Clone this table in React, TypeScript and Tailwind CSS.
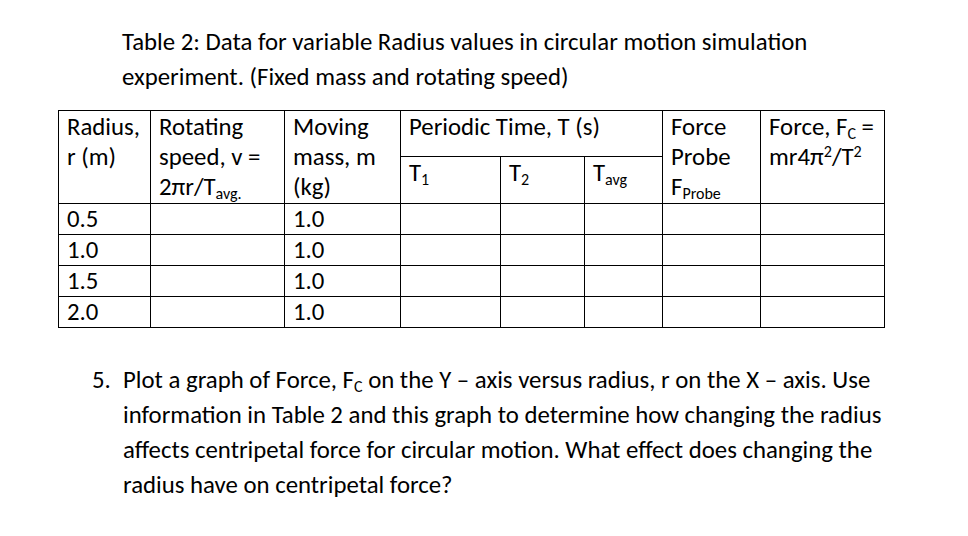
import React from 'react';

const rows = ['0.5', '1.0', '1.5', '2.0'];

const Sub = ({ children }: { children: React.ReactNode }) => (
  <span className="relative top-[4px] text-[16px] leading-none">{children}</span>
);

const Sup = ({ children }: { children: React.ReactNode }) => (
  <span className="relative top-[-8px] text-[16px] leading-none">{children}</span>
);

export default function App() {
  const cell = 'border border-black px-[8px] align-top font-normal text-left pt-[1px]';

  return (
    <div className="w-[968px] h-[536px] bg-white text-black font-['Carlito','Open_Sans',sans-serif] text-[24.8px] leading-[35px]">
      <div className="pl-[122px] pt-[24px]">
        <p>Table 2: Data for variable Radius values in circular motion simulation</p>
        <p>experiment. (Fixed mass and rotating speed)</p>
      </div>

      <div className="pl-[58px] pt-[16px]">
        <table className="table-fixed border-collapse w-[826px] leading-[30px]">
          <colgroup>
            <col className="w-[92px]" />
            <col className="w-[134px]" />
            <col className="w-[116px]" />
            <col className="w-[100px]" />
            <col className="w-[84px]" />
            <col className="w-[78px]" />
            <col className="w-[98px]" />
            <col className="w-[124px]" />
          </colgroup>
          <thead>
            <tr className="h-[46px]">
              <th rowSpan={2} className={cell}>
                Radius,
                <br />r (m)
              </th>
              <th rowSpan={2} className={cell}>
                Rotating
                <br />
                speed, v =
                <br />
                2πr/T<Sub>avg.</Sub>
              </th>
              <th rowSpan={2} className={cell}>
                Moving
                <br />
                mass, m
                <br />
                (kg)
              </th>
              <th colSpan={3} className={cell}>
                Periodic Time, T (s)
              </th>
              <th rowSpan={2} className={cell}>
                Force
                <br />
                Probe
                <br />
                F<Sub>Probe</Sub>
              </th>
              <th rowSpan={2} className={cell}>
                Force, F<Sub>C</Sub> =
                <br />
                mr4π<Sup>2</Sup>/T<Sup>2</Sup>
              </th>
            </tr>
            <tr className="h-[47px]">
              <th className={cell}>
                T<Sub>1</Sub>
              </th>
              <th className={cell}>
                T<Sub>2</Sub>
              </th>
              <th className={cell}>
                T<Sub>avg</Sub>
              </th>
            </tr>
          </thead>
          <tbody>
            {rows.map((r, i) => (
              <tr key={i} className="h-[31px]">
                <td className="border border-black px-[8px] align-middle">{r}</td>
                <td className="border border-black" />
                <td className="border border-black px-[8px] align-middle">1.0</td>
                <td className="border border-black" />
                <td className="border border-black" />
                <td className="border border-black" />
                <td className="border border-black" />
                <td className="border border-black" />
              </tr>
            ))}
          </tbody>
        </table>
      </div>

      <div className="flex pl-[92px] pt-[34px]">
        <span className="w-[31px] shrink-0">5.</span>
        <div>
          <p>
            Plot a graph of Force, F<Sub>C</Sub> on the Y – axis versus radius, r on the X – axis. Use
          </p>
          <p>information in Table 2 and this graph to determine how changing the radius</p>
          <p>affects centripetal force for circular motion. What effect does changing the</p>
          <p>radius have on centripetal force?</p>
        </div>
      </div>
    </div>
  );
}
